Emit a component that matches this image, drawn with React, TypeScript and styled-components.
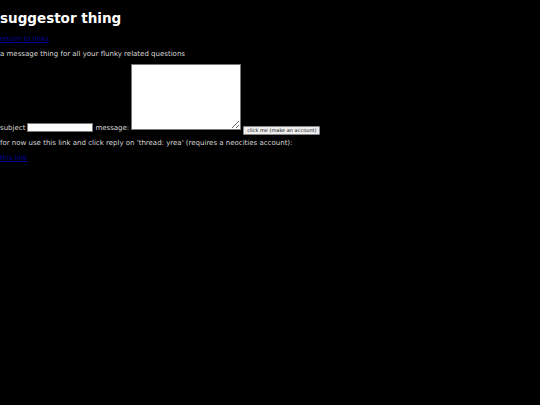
import React from "react";
import styled, { createGlobalStyle } from "styled-components";

function App() {
  return (
    <>
      <GlobalStyle />
      <Page>
        <Title>suggestor thing</Title>

        <Para>
          <Link href="#">return to links</Link>
        </Para>

        <Para>a message thing for all your flunky related questions</Para>

        <Form onSubmit={(e) => e.preventDefault()}>
          <Label $gap={2}>subject</Label>
          <Input type="text" />
          <Label $gap={2}>message:</Label>
          <Message />
          <Button type="submit">click me (make an account)</Button>
        </Form>

        <Para>
          for now use this link and click reply on 'thread: yrea' (requires a
          neocities account):
        </Para>

        <Para>
          <Link href="#">this link</Link>
        </Para>
      </Page>
    </>
  );
}

//@ styled ////////////////////////////////////////
const GlobalStyle = createGlobalStyle`
  html, body {
    margin: 0;
    background: #000;
  }
  body {
    font-family: "DejaVu Sans", Verdana, sans-serif;
    color: #d8d8d8;
    font-size: 7px;
  }
`;

const Page = styled.div`
  width: 540px;
  min-height: 405px;
  padding-top: 10px;
`;

const Title = styled.h1`
  font-size: 13.5px;
  font-weight: bold;
  color: #fff;
  margin: 0 0 9px;
  line-height: 16px;
`;

const Para = styled.p`
  margin: 0 0 6px;
  line-height: 9px;
`;

const Link = styled.a`
  color: #000099;
  text-decoration: underline;
`;

const Form = styled.form`
  margin: -1px 0 4px;
  line-height: 9px;
`;

const Label = styled.label<{ $gap?: number }>`
  margin-right: ${({ $gap }) => $gap ?? 3}px;
`;

const Input = styled.input`
  width: 66px;
  height: 9px;
  box-sizing: border-box;
  border: 1px solid #777;
  background: #fff;
  padding: 0;
  margin: 0 2px 0 0;
  vertical-align: -2px;
`;

const Message = styled.textarea`
  width: 110px;
  height: 66px;
  box-sizing: border-box;
  border: 1px solid #777;
  background: #fff;
  padding: 0;
  margin: 0 2px 0 0;
  resize: both;
  vertical-align: baseline;
`;

const Button = styled.button`
  height: 9px;
  box-sizing: border-box;
  padding: 0 3px;
  margin: 0;
  font-family: "DejaVu Sans", Verdana, sans-serif;
  font-size: 5px;
  line-height: 7px;
  color: #111;
  background: #eee;
  border: 1px solid #888;
  border-radius: 1px;
  vertical-align: -2px;
`;

export default App;
